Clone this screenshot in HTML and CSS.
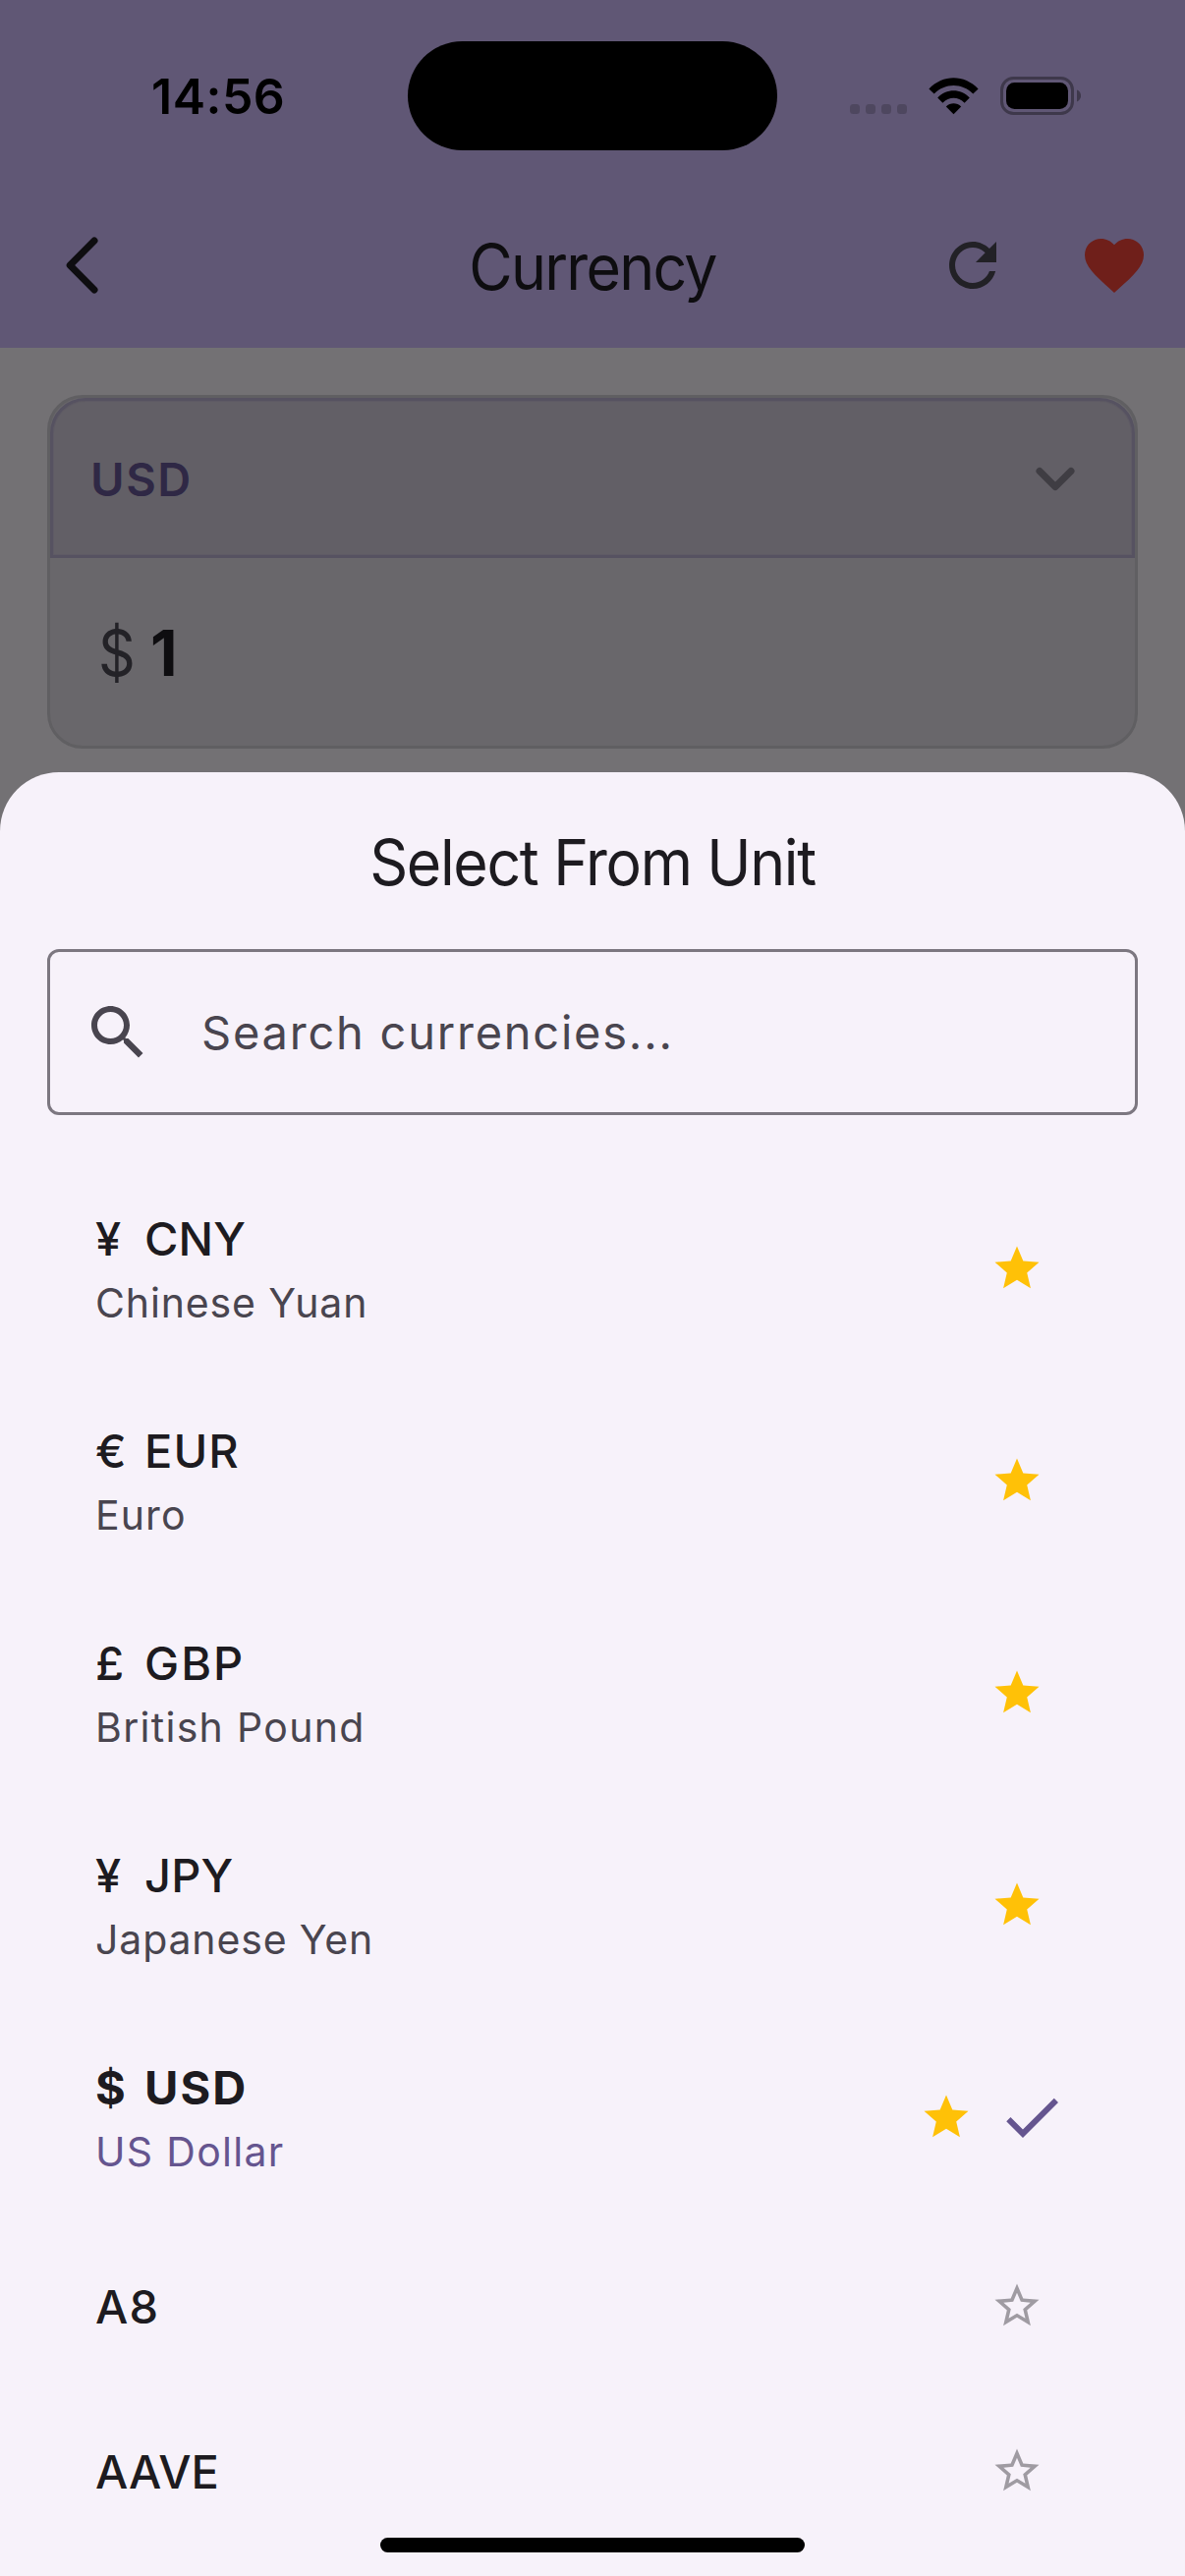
FILE: index.html
```html
<!DOCTYPE html>
<html lang="en">
<head>
<meta charset="utf-8">
<title>Currency</title>
<link rel="stylesheet" href="styles.css">
</head>
<body>
<svg class="defs" width="0" height="0">
  <symbol id="star" viewBox="0 0 24 24"><path d="M12 17.270L18.180 21l-1.640-7.030L22 9.240l-7.190-.61L12 2 9.190 8.630 2 9.240l5.460 4.730L5.820 21z"/></symbol>
  <symbol id="star-outline" viewBox="0 0 24 24"><path d="M22 9.240l-7.190-.62L12 2 9.190 8.630 2 9.240l5.460 4.730L5.820 21 12 17.270 18.180 21l-1.630-7.030L22 9.240zM12 15.400l-3.760 2.270 1-4.280-3.320-2.880 4.380-.38L12 6.100l1.710 4.040 4.380.38-3.320 2.880 1 4.280L12 15.400z"/></symbol>
</svg>
<div class="screen">
  <div class="top">
    <div class="status">
      <div class="time">14:56</div>
      <div class="island"></div>
      <div class="indicators">
        <div class="dots"><i></i><i></i><i></i><i></i></div>
        <svg class="wifi" width="51" height="38" viewBox="0 0 51 38">
          <path d="M0.4 11.400C14.500-3.600 36.500-3.600 50.600 11.400L45.300 16.600C34.300 5.200 16.700 5.200 5.700 16.600z"/>
          <path d="M9.200 20.400C18.400 10.700 32.600 10.700 41.800 20.400L36.600 25.700C30.200 19.200 20.800 19.200 14.400 25.700z"/>
          <path d="M17.800 29.400C22 25.100 29 25.100 33.200 29.400L25.500 37.200z"/>
        </svg>
        <svg class="battery" width="82" height="40" viewBox="0 0 82 40">
          <rect x="1.500" y="1.500" width="72" height="36" rx="12" fill="none" stroke="#3e384b" stroke-width="3"/>
          <rect x="6" y="6" width="63" height="27" rx="8.500"/>
          <path d="M78 13.500c5.400 2 5.400 10 0 12z" fill="#3e384b"/>
        </svg>
      </div>
    </div>
    <div class="appbar">
      <svg class="back" width="36" height="60" viewBox="0 0 36 60"><path d="M32 5L7.200 30 32 55"/></svg>
      <h1>Currency</h1>
      <div class="tools">
        <svg width="72" height="72" viewBox="0 0 24 24" fill="#222126"><path d="M17.650 6.350C16.200 4.900 14.210 4 12 4c-4.420 0-7.990 3.580-7.990 8s3.570 8 7.990 8c3.730 0 6.840-2.550 7.730-6h-2.080c-.82 2.330-3.040 4-5.650 4-3.310 0-6-2.690-6-6s2.690-6 6-6c1.660 0 3.140.69 4.220 1.780L13 11h7V4l-2.350 2.350z"/></svg>
        <svg width="72" height="72" viewBox="0 0 24 24" fill="#6f1f1a"><path d="M12 21.350l-1.450-1.320C5.400 15.360 2 12.280 2 8.500 2 5.420 4.420 3 7.500 3c1.740 0 3.410.81 4.500 2.090C13.090 3.810 14.760 3 16.500 3 19.580 3 22 5.420 22 8.500c0 3.780-3.400 6.860-8.550 11.540L12 21.350z"/></svg>
      </div>
    </div>
  </div>
  <div class="card">
    <div class="unit">
      <span>USD</span>
      <svg width="44" height="30" viewBox="0 0 44 30"><path d="M6 6.500l16 16 16-16"/></svg>
    </div>
    <div class="amount"><span class="sign">$</span><span class="value">1</span></div>
  </div>
  <div class="sheet">
    <h2>Select From Unit</h2>
    <div class="search">
      <svg width="72" height="72" viewBox="0 0 24 24"><path d="M15.500 14h-.79l-.28-.27C15.410 12.590 16 11.110 16 9.500 16 5.910 13.090 3 9.500 3S3 5.910 3 9.500 5.910 16 9.500 16c1.610 0 3.090-.59 4.230-1.570l.27.28v.79l5 4.990L20.490 19l-4.990-5zm-6 0C7.010 14 5 11.990 5 9.500S7.010 5 9.500 5 14 7.010 14 9.500 11.990 14 9.500 14z"/></svg>
      <span>Search currencies...</span>
    </div>
    <div class="list">
      <div class="row">
        <div class="label"><div class="code tight"><b>¥</b>CNY</div><div class="name tight">Chinese Yuan</div></div>
        <svg class="star"><use href="#star"/></svg>
      </div>
      <div class="row">
        <div class="label"><div class="code"><b>€</b>EUR</div><div class="name">Euro</div></div>
        <svg class="star"><use href="#star"/></svg>
      </div>
      <div class="row">
        <div class="label"><div class="code loose"><b>£</b>GBP</div><div class="name loose">British Pound</div></div>
        <svg class="star"><use href="#star"/></svg>
      </div>
      <div class="row">
        <div class="label"><div class="code tight"><b>¥</b>JPY</div><div class="name tight">Japanese Yen</div></div>
        <svg class="star"><use href="#star"/></svg>
      </div>
      <div class="row selected">
        <div class="label"><div class="code loose"><b>$</b>USD</div><div class="name loose">US Dollar</div></div>
        <svg class="star"><use href="#star"/></svg>
        <svg class="check" width="72" height="72" viewBox="0 0 24 24"><path d="M9 16.170L4.830 12l-1.420 1.410L9 19 21 7l-1.410-1.410z"/></svg>
      </div>
      <div class="row short">
        <div class="label"><div class="code">A8</div></div>
        <svg class="star off"><use href="#star-outline"/></svg>
      </div>
      <div class="row short">
        <div class="label"><div class="code tight">AAVE</div></div>
        <svg class="star off"><use href="#star-outline"/></svg>
      </div>
    </div>
    <div class="home"></div>
  </div>
</div>
</body>
</html>
```
FILE: styles.css
```css
* { box-sizing: border-box; }
body { margin: 0; font-family: Inter, "Liberation Sans", sans-serif; }
svg { display: block; flex: none; }
h1, h2 { margin: 0; font-weight: 400; font-size: 64px; white-space: nowrap; transform: scaleX(0.95); }
.defs { position: absolute; }
.screen { position: relative; width: 1206px; height: 2622px; overflow: hidden; background: #737174; }

.top { height: 354px; background: #605775; }
.status { display: flex; align-items: flex-start; height: 186px; padding: 43px 0 0 154px; }
.time { width: 261px; margin-top: 25px; font-size: 50px; font-weight: 600; letter-spacing: 0.5px; line-height: 60px; }
.island { width: 376px; height: 111px; margin-top: -1px; border-radius: 56px; background: #000; }
.indicators { display: flex; align-items: flex-start; margin: 35px 0 0 74px; }
.dots { display: flex; gap: 6px; padding-top: 28px; }
.dots i { width: 10px; height: 10px; border-radius: 3.5px; background: #4e475f; }
.wifi { margin: 1px 0 0 22px; }
.battery { margin-left: 22px; }

.appbar { display: grid; grid-template-columns: 1fr auto 1fr; align-items: center; height: 168px; padding: 0 36px 0 64px; }
.appbar h1 { width: 278px; margin: 3px -14px 0 -14px; text-align: center; color: #0e0d10; line-height: 80px; letter-spacing: -1.8px; }
.appbar { grid-template-columns: 400px 250px 1fr; }
.back path { fill: none; stroke: #0e0d10; stroke-width: 7px; stroke-linecap: round; stroke-linejoin: round; }
.appbar { column-gap: 14px; }
.tools { display: flex; gap: 72px; justify-content: flex-end; }

.card { margin: 48px 48px 0; height: 360px; border: 3px solid #605f62; border-radius: 36px; background: #69676b; }
.unit { display: flex; align-items: center; justify-content: space-between; height: 163px; padding: 2px 56px 0 38px; border: 3px solid #565261; border-radius: 36px 36px 0 0; background: #625f66; box-shadow: inset 0 0 0 1px #5e5a65; }
.unit span { font-size: 47px; font-weight: 600; letter-spacing: 1.6px; color: #2f2845; line-height: 60px; }
.unit path { fill: none; stroke: #3f3d43; stroke-width: 7px; stroke-linecap: round; stroke-linejoin: round; }
.amount { display: flex; align-items: center; height: 191px; padding: 2px 0 0 49px; font-size: 64px; }
.sign { width: 53px; color: #232227; transform: scaleX(0.92); transform-origin: left; }
.value { font-weight: 700; color: #0e0d10; }

.sheet { position: absolute; left: 0; right: 0; top: 786px; bottom: 0; padding: 44px 48px 0; border-radius: 60px 60px 0 0; background: #f7f2fa; }
.sheet h2 { text-align: center; line-height: 96px; letter-spacing: -1.4px; color: #1d1b20; }
.search { display: flex; align-items: center; height: 169px; margin-top: 40px; padding-left: 33px; border: 3px solid #7c7780; border-radius: 12px; font-size: 47px; letter-spacing: 1.77px; color: #49454f; }
.search svg { fill: #49454f; }
.search span { margin: 0 0 0 49px; }
.list { margin-top: 48px; }
.row { display: flex; align-items: center; height: 216px; padding: 0 96px 0 49px; }
.row.short { height: 168px; }
.label { flex: 1; margin-top: -2px; }
.code { display: flex; line-height: 72px; font-size: 47px; font-weight: 500; letter-spacing: 1.1px; color: #1d1b20; }
.code b { width: 50px; font-weight: 500; }
.code.tight { letter-spacing: 0.1px; }
.code.loose { letter-spacing: 2px; }
.name { line-height: 58px; font-size: 41px; letter-spacing: 1.1px; color: #49454f; }
.name.tight { letter-spacing: 0.85px; }
.name.loose { letter-spacing: 1.3px; }
.row.short .code { padding-top: 3px; }
.star { width: 54px; height: 54px; fill: #ffc107; }
.star.off { fill: #9f9ba2; }
.selected { padding-right: 72px; }
.selected .code, .selected .code b { font-weight: 700; }
.selected .name { color: #65558f; }
.check { margin-left: 24px; fill: #65558f; }
.home { position: absolute; left: 387px; bottom: 24px; width: 432px; height: 15px; border-radius: 8px; background: #000; }
```
